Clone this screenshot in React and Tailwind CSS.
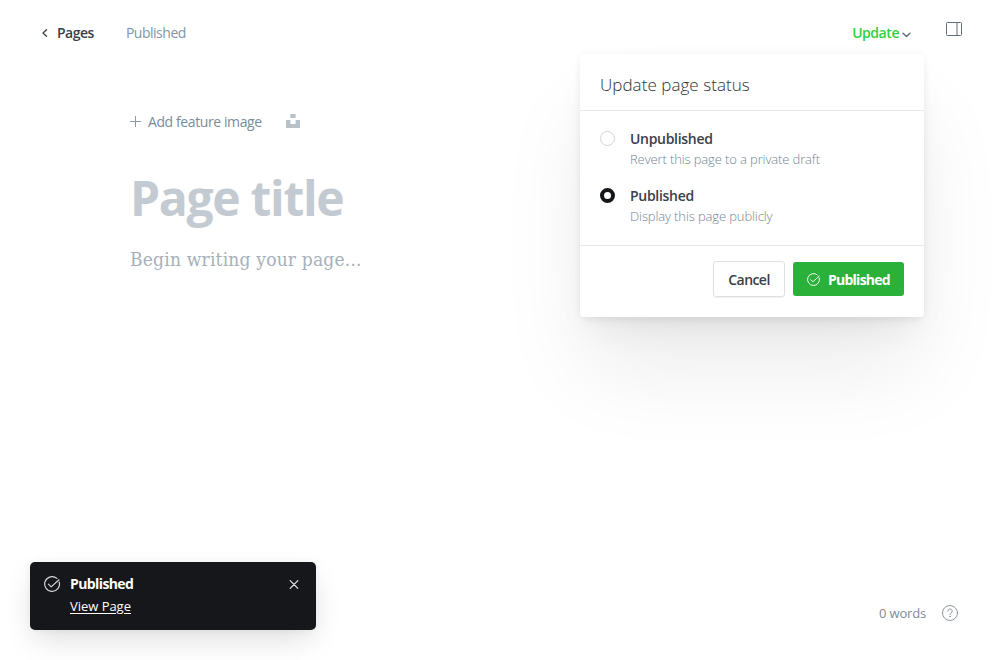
import React from "react";

function CheckCircle({ className }) {
  return (
    <svg className={className} viewBox="0 0 16 16" fill="none" stroke="currentColor" strokeWidth="1.15" strokeLinecap="round" strokeLinejoin="round">
      <path d="M15.2 6A7.4 7.4 0 1 1 12.9 2.4" />
      <path d="M4.4 8.2 7.2 10.9 15 3.8" />
    </svg>
  );
}

function Header() {
  return (
    <header className="flex h-[66px] items-center justify-between pl-[41px] pr-[38px]">
      <div className="flex items-center text-[14px] leading-5">
        <a className="flex items-center font-semibold text-[#394047]">
          <svg className="mr-[9px] h-2 w-[7px]" viewBox="0 0 7 8" fill="none" stroke="currentColor" strokeWidth="1.3" strokeLinecap="round" strokeLinejoin="round">
            <path d="M5.5 .7 2 4 5.5 7.3" />
          </svg>
          <span className="tracking-[-0.5px]">Pages</span>
        </a>
        <span className="ml-8 tracking-[-0.48px] text-[#8494a4]">Published</span>
      </div>
      <div className="flex items-center">
        <button className="flex items-center text-[14px] font-semibold leading-5 text-[#30cf43]">
          <span className="tracking-[-0.45px]">Update</span>
          <svg className="ml-[3px] mt-1 h-[6px] w-[9px] text-[#626d79]" viewBox="0 0 9 6" fill="none" stroke="currentColor" strokeWidth="1.4" strokeLinecap="round" strokeLinejoin="round">
            <path d="M1 1.2 4.5 4.6 8 1.2" />
          </svg>
        </button>
        <svg className="-mt-2 ml-[35px] h-[14px] w-4 text-[#626d79]" viewBox="0 0 16 14" fill="none" stroke="currentColor">
          <rect x=".5" y=".5" width="15" height="13" rx="1" />
          <path d="M11 .5v13" />
        </svg>
      </div>
    </header>
  );
}

function Editor() {
  return (
    <main className="flex-1 pl-[130px] pt-[46px]">
      <div className="flex h-5 items-center text-[14px] leading-5 text-[#7c8b9a]">
        <svg className="-mt-[2px] mr-[7px] h-[11px] w-[11px] text-[#8d99a5]" viewBox="0 0 11 11" stroke="currentColor">
          <path d="M5.5 0v11M0 5.5h11" />
        </svg>
        <span className="tracking-[-0.4px]">Add feature image</span>
        <svg className="-mt-[2px] ml-6 h-[14px] w-[14px] text-[#b9c1c8]" viewBox="0 0 14 14" fill="currentColor">
          <path d="M4.4 0h5.2v4H4.4zM0 6h4.4v4h5.2V6H14v8H0z" />
        </svg>
      </div>
      <h1 className="mt-[36px] text-[48px] font-bold leading-[60px] tracking-[-1.3px] text-[#c3cad1]">Page title</h1>
      <p className="mt-[15px] font-['DejaVu_Serif_Condensed','DejaVu_Serif',serif] text-[19px] leading-8 tracking-[0.2px] text-[#a6b0ba]">Begin writing your page...</p>
    </main>
  );
}

function StatusOption({ title, detail, checked }) {
  return (
    <div className="flex h-[57px]">
      <span className={checked ? "mt-[1px] h-[15px] w-[15px] rounded-full border-4 border-[#15171a] bg-white" : "mt-[1px] h-[15px] w-[15px] rounded-full border border-[#ced4d9] bg-white"} />
      <div className="ml-[15px]">
        <div className="text-[14px] font-semibold leading-[18px] tracking-[-0.3px] text-[#394047]">{title}</div>
        <div className="mt-px text-[13px] font-light leading-5 tracking-[-0.12px] text-[#738393]">{detail}</div>
      </div>
    </div>
  );
}

function StatusMenu() {
  return (
    <section className="absolute left-[580px] top-[54px] h-[263px] w-[344px] rounded-[4px] bg-white shadow-[0_0_7px_rgba(0,0,0,0.05),0_7px_12px_-4px_rgba(0,0,0,0.06),0_20px_32px_-8px_rgba(0,0,0,0.05),0_57px_90px_-6px_rgba(0,0,0,0.08)]">
      <h2 className="h-[57px] border-b border-[#e6e9eb] px-5 pt-[19px] text-[17px] font-light leading-6 tracking-[0.05px] text-[#2b3238]">Update page status</h2>
      <div className="h-[135px] border-b border-[#e6e9eb] px-5 pt-[19px]">
        <StatusOption title="Unpublished" detail="Revert this page to a private draft" />
        <StatusOption title="Published" detail="Display this page publicly" checked />
      </div>
      <div className="flex items-center justify-end gap-2 px-5 pt-[15px]">
        <button className="h-9 w-[72px] rounded-[3px] border border-[#dde1e5] pt-px text-[14px] font-semibold tracking-[-0.55px] text-[#394047] shadow-[0_1px_1px_rgba(0,0,0,0.06)]">Cancel</button>
        <button className="flex h-[34px] w-[111px] items-center rounded-[3px] bg-[#2ab13a] pl-[14px] text-[14px] font-bold text-white">
          <CheckCircle className="mr-2 h-[13px] w-[13px]" />
          <span className="pt-px tracking-[-0.75px]">Published</span>
        </button>
      </div>
    </section>
  );
}

function Toast() {
  return (
    <aside className="absolute left-[30px] top-[562px] flex h-[68px] w-[286px] rounded-[5px] bg-[#15171a] pl-[14px] pt-3 text-white shadow-[0_0_7px_rgba(0,0,0,0.05),0_12px_30px_-4px_rgba(0,0,0,0.14)]">
      <CheckCircle className="mt-[2px] h-4 w-4 text-[#d5d9dc]" />
      <div className="ml-[10px] w-[219px]">
        <div className="text-[14px] font-bold leading-5 tracking-[-0.6px]">Published</div>
        <a className="block text-[13px] leading-6 tracking-[-0.03px] underline underline-offset-2">View Page</a>
      </div>
      <svg className="mt-[6px] h-[9px] w-[10px] text-[#e5e7e9]" viewBox="0 0 10 9" stroke="currentColor" strokeWidth="1.2" strokeLinecap="round">
        <path d="M1.2 .7 8.8 8.3M8.8 .7 1.2 8.3" />
      </svg>
    </aside>
  );
}

export default function App() {
  return (
    <div className="relative flex h-[660px] w-[1000px] flex-col overflow-hidden bg-white font-['Open_Sans','Noto_Sans',sans-serif]">
      <Header />
      <Editor />
      <footer className="flex h-[94px] items-start justify-end pr-[42px] pt-[37px] text-[#7c8b9a]">
        <span className="text-[13px] leading-5 tracking-[-0.17px]">0 words</span>
        <svg className="ml-4 mt-[2px] h-4 w-4 text-[#8c98a5]" viewBox="0 0 16 16" fill="none" stroke="currentColor" strokeLinecap="round" strokeLinejoin="round">
          <circle cx="8" cy="8" r="7.5" />
          <path d="M5.8 6.2A2.2 2.2 0 1 1 9 8.1c-.7.4-1 .7-1 1.5" />
          <circle cx="8" cy="11.6" r=".25" />
        </svg>
      </footer>
      <StatusMenu />
      <Toast />
    </div>
  );
}
